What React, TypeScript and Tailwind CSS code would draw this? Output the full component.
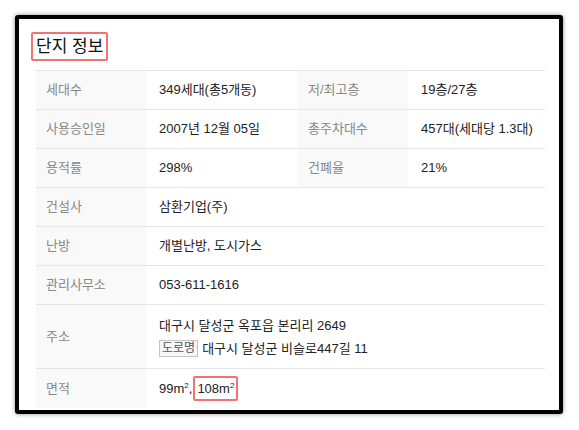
import React from 'react';

type Cell = { label: string; value: React.ReactNode };

const FONT = "font-['Liberation_Sans','Noto_Sans_CJK_KR',sans-serif]";

const Sq = ({ n }: { n: string }) => (
  <span>
    {n}m<span className="relative -top-[5px] text-[8px]">2</span>
  </span>
);

const pairs: [Cell, Cell][] = [
  [
    { label: '세대수', value: '349세대(총5개동)' },
    { label: '저/최고층', value: '19층/27층' },
  ],
  [
    { label: '사용승인일', value: '2007년 12월 05일' },
    { label: '총주차대수', value: '457대(세대당 1.3대)' },
  ],
  [
    { label: '용적률', value: '298%' },
    { label: '건폐율', value: '21%' },
  ],
];

const singles: Cell[] = [
  { label: '건설사', value: '삼환기업(주)' },
  { label: '난방', value: '개별난방, 도시가스' },
  { label: '관리사무소', value: '053-611-1616' },
];

const th = 'w-[110px] bg-[#f9f9f9] pl-[10px] text-left font-normal text-[#888] align-middle';
const td = 'pl-[13px] text-[#222] align-middle';

export default function App() {
  return (
    <div className={`w-[579px] h-[430px] bg-white p-[15px] ${FONT}`}>
      <div className="h-[399px] w-[548px] overflow-hidden rounded-[3px] border-[4px] border-black bg-white shadow-[0_0_4px_rgba(0,0,0,0.45)]">
        <div className="pl-[12px] pt-[13px]">
          <h2 className="inline-flex h-[29px] items-center rounded-[2px] border-2 border-[#f07272] px-[3px] text-[17px] font-normal text-[#111]">
            단지 정보
          </h2>
        </div>
        <table className="ml-[17px] mt-[9px] w-[509px] table-fixed border-collapse text-[13px]">
          <colgroup>
            <col className="w-[110px]" />
            <col className="w-[152px]" />
            <col className="w-[110px]" />
            <col className="w-[137px]" />
          </colgroup>
          <tbody>
            {pairs.map(([a, b], i) => (
              <tr key={i} className="h-[39px] border-t border-[#e6e6e6]">
                <th className={th}>{a.label}</th>
                <td className={td}>{a.value}</td>
                <th className={th}>{b.label}</th>
                <td className={td}>{b.value}</td>
              </tr>
            ))}
            {singles.map((c, i) => (
              <tr key={i} className="h-[39px] border-t border-[#e6e6e6]">
                <th className={th}>{c.label}</th>
                <td className={td} colSpan={3}>
                  {c.value}
                </td>
              </tr>
            ))}
            <tr className="h-[64px] border-t border-[#e6e6e6]">
              <th className={th}>주소</th>
              <td className={td} colSpan={3}>
                <div className="leading-[23px]">대구시 달성군 옥포읍 본리리 2649</div>
                <div className="flex items-center leading-[23px]">
                  <span className="mr-[4px] inline-flex h-[17px] items-center border border-[#c4c4c4] bg-[#f6f6f6] px-[2px] text-[12px] text-[#555]">
                    도로명
                  </span>
                  대구시 달성군 비슬로447길 11
                </div>
              </td>
            </tr>
            <tr className="h-[39px] border-t border-[#e6e6e6]">
              <th className={th}>면적</th>
              <td className={td} colSpan={3}>
                <div className="flex items-center">
                  <Sq n="99" />,
                  <span className="ml-[1px] inline-flex h-[25px] items-center rounded-[2px] border-2 border-[#f07272] px-[2px]">
                    <Sq n="108" />
                  </span>
                </div>
              </td>
            </tr>
          </tbody>
        </table>
      </div>
    </div>
  );
}
